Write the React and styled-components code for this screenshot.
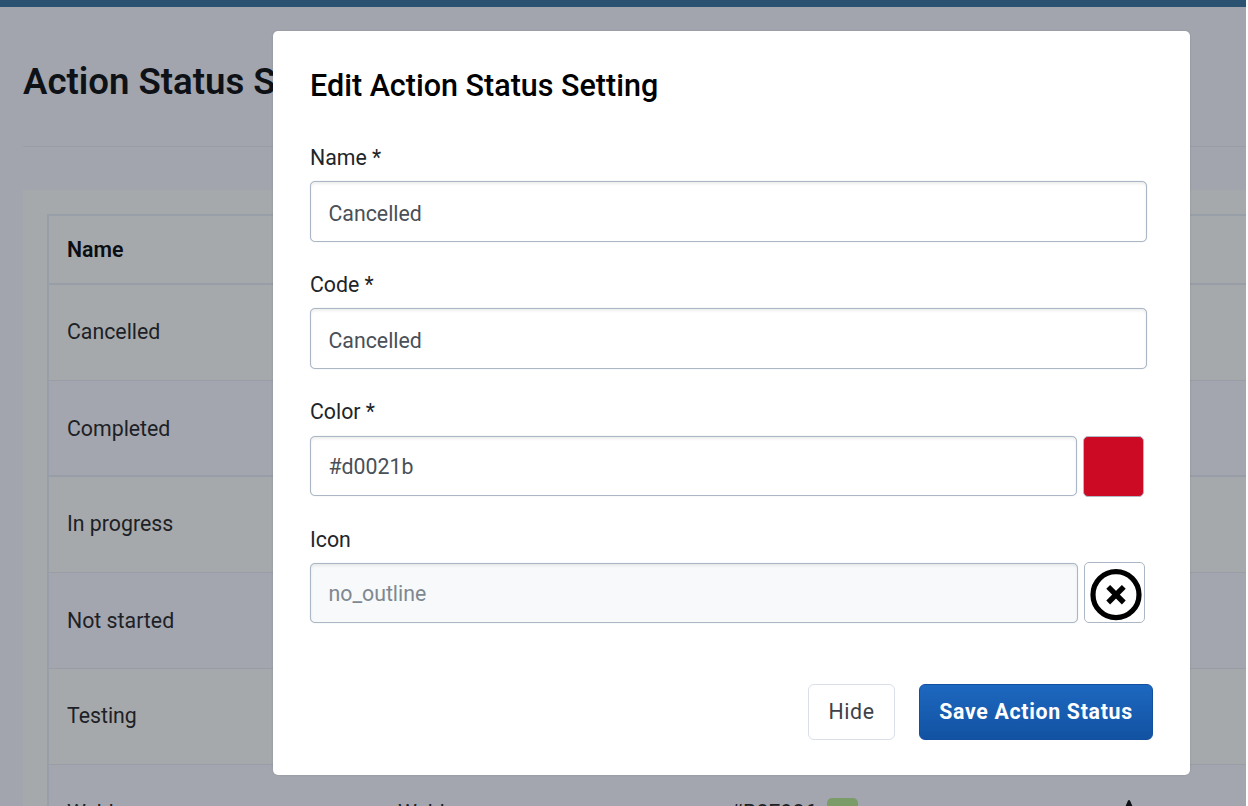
import React from "react";
import styled, { createGlobalStyle, css } from "styled-components";

const GlobalStyle = createGlobalStyle`
  *, *::before, *::after { box-sizing: border-box; }
  html, body { margin: 0; height: 806px; overflow: hidden; background: #fff; }
  body, input, button { font-family: Roboto, "Liberation Sans", sans-serif; font-size: 21.3px; }
`;

const Page = styled.div`
  width: 1246px;
  height: 806px;
  overflow: hidden;
  background: #a2a5ad;
`;

const TopBar = styled.div`
  height: 7px;
  background: #2b5270;
`;

const Content = styled.main`
  padding-left: 23px;
`;

const PageHeader = styled.header`
  height: 140px;
  padding-top: 50px;
  border-bottom: 1px solid #999da7;
`;

const PageTitle = styled.h1`
  margin: 0;
  font-size: 36.6px;
  line-height: 50px;
  font-weight: 600;
  color: #0e1217;
  white-space: nowrap;
`;

const Panel = styled.section`
  margin-top: 43px;
  padding: 24px 0 0 24px;
  height: 640px;
  background: #a6a9ac;
`;

const Table = styled.div`
  border: 2px solid #999fa8;
  border-right: 0;
`;

const Row = styled.div`
  display: grid;
  grid-template-columns: 331px 332px 386px 1fr;
  align-items: center;
  padding: 0 0 ${(p) => (p.$striped || p.$head ? 0 : 2)}px 18px;
  height: ${(p) => p.$height}px;
  color: #1d2126;
  background: ${(p) => (p.$striped ? "#a3a6ae" : "transparent")};
  border-bottom: ${(p) => p.$line || 1}px solid #999da7;
  ${(p) =>
    p.$head &&
    css`
      font-weight: 600;
      color: #0b0e13;
    `}
`;

const ColorCell = styled.span`
  display: flex;
  align-items: center;
  gap: 11px;
`;

const Chip = styled.i`
  width: 31px;
  height: 29px;
  border-radius: 5px;
  background: #7b9c68;
`;

const Backdrop = styled.div`
  position: absolute;
  inset: 0 2px 0 0;
  padding: 31px 56px 31px 273px;
`;

const Dialog = styled.form`
  width: 917px;
  height: 744px;
  padding: 30px 37px 36px;
  background: #fff;
  border-radius: 5px;
  box-shadow: 0 0 2px rgba(0, 0, 0, 0.15);
`;

const DialogTitle = styled.h2`
  margin: 0 0 28px;
  font-size: 30.5px;
  line-height: 50px;
  font-weight: 500;
  color: #000;
`;

const Field = styled.div`
  height: 127.2px;
`;

const Label = styled.label`
  display: block;
  height: 42.2px;
  line-height: 38px;
  color: #212529;
`;

const Controls = styled.div`
  display: flex;
  align-items: flex-start;
  gap: 6px;
`;

const Input = styled.input`
  display: block;
  width: ${(p) => p.$width}px;
  height: ${(p) => p.$height || 61}px;
  padding: ${(p) => (p.$height ? 1 : 3)}px 17.5px 0;
  color: #495057;
  background: #fff;
  border: 1.5px solid #abb7c4;
  border-radius: 5px;
  box-shadow: inset 0 2px 3px rgba(0, 0, 0, 0.07), 0 0 1px #b9c4cf;
  outline: 0;
  &:disabled {
    color: #7f8890;
    background: #f7f9fb;
  }
`;

const Swatch = styled.button`
  width: 61px;
  height: 61px;
  padding: 0;
  border: 1px solid #b0bbc7;
  border-radius: 5px;
  background: #cd0a24;
`;

const IconButton = styled.button`
  display: flex;
  width: 61px;
  height: 61px;
  margin-top: -1px;
  padding: 6px 0 0 5px;
  border: 1px solid #abb7c4;
  border-radius: 5px;
  background: #fff;
`;

const Footer = styled.footer`
  display: flex;
  justify-content: flex-end;
  gap: 24px;
  margin-top: 36.2px;
`;

const Button = styled.button`
  width: 87px;
  height: 56px;
  padding: 0;
  color: #3d4248;
  background: #fff;
  border: 1px solid #d9dfe8;
  border-radius: 6px;
  letter-spacing: 0.6px;
`;

const PrimaryButton = styled(Button)`
  width: 234px;
  color: #fff;
  font-weight: 700;
  letter-spacing: 0.7px;
  background: linear-gradient(#1d68c0, #1252a2);
  border-color: #12509f;
`;

const rows = [
  { name: "Cancelled" },
  { name: "Completed", line: 2 },
  { name: "In progress" },
  { name: "Not started" },
  { name: "Testing" },
];

function CancelIcon() {
  return (
    <svg width="52" height="52" viewBox="0 0 52 52" fill="none" stroke="#000">
      <circle cx="26" cy="25.7" r="23" strokeWidth="5.2" />
      <path d="M18.2 17.9 33.8 33.5M33.8 17.9 18.2 33.5" strokeWidth="5.4" />
    </svg>
  );
}

export default function App() {
  return (
    <>
      <GlobalStyle />
      <Page>
        <TopBar />
        <Content>
          <PageHeader>
            <PageTitle>Action Status Settings</PageTitle>
          </PageHeader>
          <Panel>
            <Table>
              <Row $head $height={69} $line={2}>
                <span>Name</span>
              </Row>
              {rows.map((row, i) => (
                <Row key={row.name} $height={96} $striped={i % 2 === 1} $line={row.line}>
                  <span>{row.name}</span>
                </Row>
              ))}
              <Row $height={96} $striped>
                <span>Webb</span>
                <span>Webb</span>
                <ColorCell>
                  #B8E986 <Chip />
                </ColorCell>
                <svg width="26" height="26" viewBox="0 0 26 26" fill="#0d1014">
                  <path d="M11.8 1Q13 -1 14.2 1L25 26H1z" />
                </svg>
              </Row>
            </Table>
          </Panel>
        </Content>
      </Page>
      <Backdrop>
        <Dialog>
          <DialogTitle>Edit Action Status Setting</DialogTitle>
          <Field>
            <Label>Name *</Label>
            <Input $width={837} defaultValue="Cancelled" />
          </Field>
          <Field>
            <Label>Code *</Label>
            <Input $width={837} defaultValue="Cancelled" />
          </Field>
          <Field>
            <Label>Color *</Label>
            <Controls>
              <Input $width={767} $height={60} defaultValue="#d0021b" />
              <Swatch type="button" />
            </Controls>
          </Field>
          <Field>
            <Label>Icon</Label>
            <Controls>
              <Input $width={768} $height={60} defaultValue="no_outline" disabled />
              <IconButton type="button">
                <CancelIcon />
              </IconButton>
            </Controls>
          </Field>
          <Footer>
            <Button type="button">Hide</Button>
            <PrimaryButton type="button">Save Action Status</PrimaryButton>
          </Footer>
        </Dialog>
      </Backdrop>
    </>
  );
}
